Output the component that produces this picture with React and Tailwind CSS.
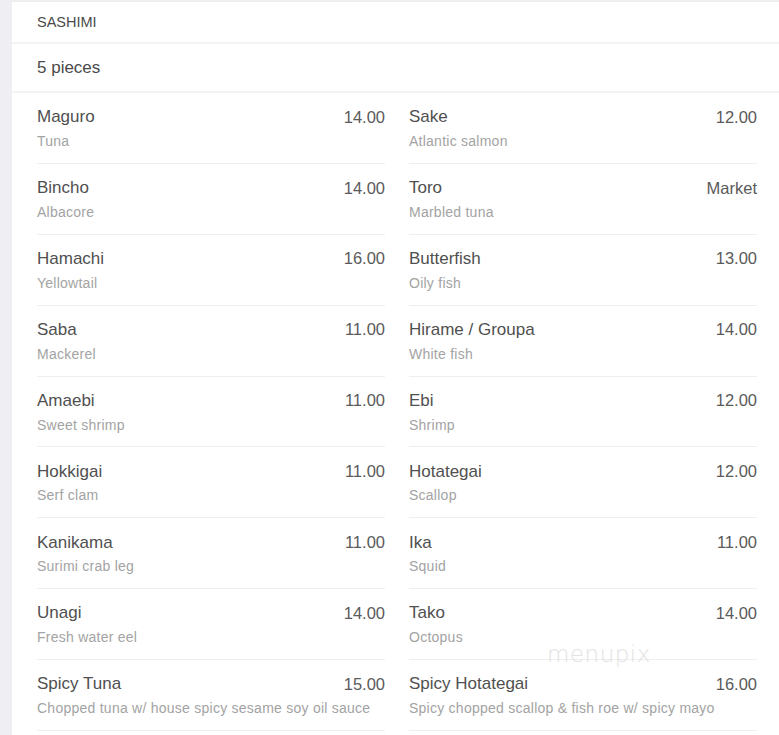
const items = [
  [{ name: "Maguro", desc: "Tuna", price: "14.00" }, { name: "Sake", desc: "Atlantic salmon", price: "12.00" }],
  [{ name: "Bincho", desc: "Albacore", price: "14.00" }, { name: "Toro", desc: "Marbled tuna", price: "Market" }],
  [{ name: "Hamachi", desc: "Yellowtail", price: "16.00" }, { name: "Butterfish", desc: "Oily fish", price: "13.00" }],
  [{ name: "Saba", desc: "Mackerel", price: "11.00" }, { name: "Hirame / Groupa", desc: "White fish", price: "14.00" }],
  [{ name: "Amaebi", desc: "Sweet shrimp", price: "11.00" }, { name: "Ebi", desc: "Shrimp", price: "12.00" }],
  [{ name: "Hokkigai", desc: "Serf clam", price: "11.00" }, { name: "Hotategai", desc: "Scallop", price: "12.00" }],
  [{ name: "Kanikama", desc: "Surimi crab leg", price: "11.00" }, { name: "Ika", desc: "Squid", price: "11.00" }],
  [{ name: "Unagi", desc: "Fresh water eel", price: "14.00" }, { name: "Tako", desc: "Octopus", price: "14.00" }],
  [
    { name: "Spicy Tuna", desc: "Chopped tuna w/ house spicy sesame soy oil sauce", price: "15.00" },
    { name: "Spicy Hotategai", desc: "Spicy chopped scallop & fish roe w/ spicy mayo", price: "16.00" },
  ],
];

const MenuItem = ({ name, desc, price }) => (
  <div className="pt-[12px] pb-[11.875px] border-b border-[#efefef]">
    <div className="flex items-center justify-between h-6">
      <span className="text-[17px] text-[#505050]">{name}</span>
      <span className="text-[16.5px] text-[#5a5a5a]">{price}</span>
    </div>
    <div className="mt-[2px] h-5 leading-5 text-[14px] tracking-[0.25px] text-[#a3a3a3] whitespace-nowrap">{desc}</div>
  </div>
);

export default function App() {
  return (
    <div className="min-h-[735px] bg-[#eeeef3] pl-3 pt-[1px] font-['Liberation_Sans',Arial,sans-serif]">
      <div className="relative bg-white border-t border-[#ececec] min-h-[734px]">
        <div className="h-[42px] pt-[2px] flex items-center pl-[25px] border-b-2 border-[#f3f3f3] text-[14.5px] text-[#4a4a4a]">
          SASHIMI
        </div>
        <div className="h-[49px] flex items-center pl-[25px] border-b-2 border-[#f3f3f3] text-[17px] text-[#4a4a4a]">
          5 pieces
        </div>
        <div className="pl-[25px] grid grid-cols-[348px_348px] gap-x-6">
          {items.map((pair, i) => (
            <div key={i} className="contents">
              <MenuItem {...pair[0]} />
              <MenuItem {...pair[1]} />
            </div>
          ))}
        </div>
        <div className="absolute left-[535px] top-[635px] text-[23px] tracking-[0.5px] text-[#dcdcdc] opacity-80 font-['DejaVu_Sans',sans-serif] font-extralight pointer-events-none">
          menupix
        </div>
      </div>
    </div>
  );
}
